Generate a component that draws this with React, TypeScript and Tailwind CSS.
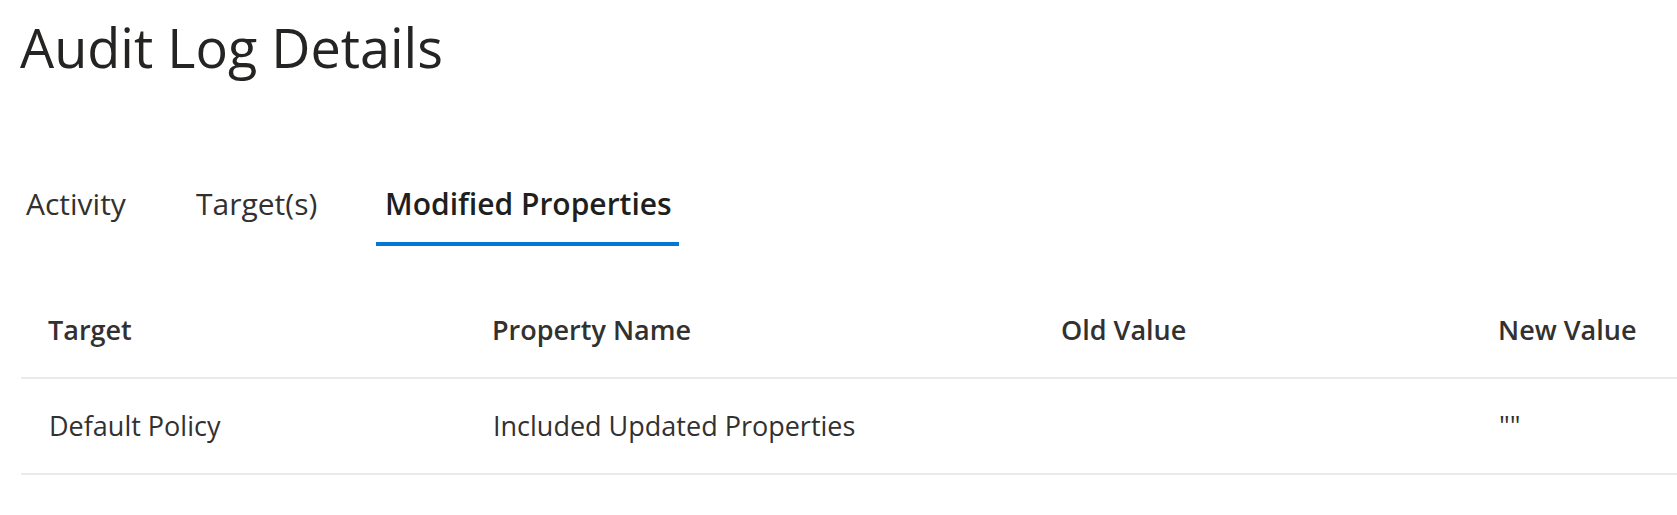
const font = { fontFamily: '"Segoe UI", "Open Sans", sans-serif' };

const tabs = [
  { label: "Activity", w: "w-[170px]", pl: "pl-[8px]", active: false },
  { label: "Target(s)", w: "w-[188px]", pl: "pl-[8px]", active: false },
  { label: "Modified Properties", w: "w-[304px]", pl: "pl-[9px]", active: true },
];

const cols = ["w-[444px]", "w-[569px]", "w-[437px]", "flex-1"];
const head = ["Target", "Property Name", "Old Value", "New Value"];
const row = ["Default Policy", "Included Updated Properties", "", '""'];

export default function App() {
  return (
    <div className="w-screen h-screen bg-white text-[#323130] overflow-hidden" style={font}>
      <h1 className="pl-[20px] pt-[9px] text-[54px] leading-[76px] font-normal text-[#252423]">
        Audit Log Details
      </h1>

      <div className="flex pl-[18px] mt-[97px]">
        {tabs.map((t) => (
          <button
            key={t.label}
            className={`${t.w} ${t.pl} text-left h-[64px] flex flex-col justify-between`}
          >
            <span
              className={`text-[30px] leading-[44px] ${
                t.active ? "font-semibold text-[#201f1e]" : "font-normal text-[#323130]"
              }`}
            >
              {t.label}
            </span>
            <span
              className={`block h-[4px] ${t.active ? "bg-[#0078d4] w-[303px] -ml-[9px]" : ""}`}
            />
          </button>
        ))}
      </div>

      <div className="ml-[21px] mt-[37px]">
        <div className="flex h-[96px] items-center border-b-2 border-[#edebe9]">
          {head.map((h, i) => (
            <div key={h} className={`${cols[i]} pl-[27px] text-[27px] font-semibold text-[#323130]`}>
              {h}
            </div>
          ))}
        </div>
        <div className="flex h-[96px] items-center border-b-2 border-[#edebe9]">
          {row.map((c, i) => (
            <div key={i} className={`${cols[i]} pl-[28px] text-[27px] text-[#323130]`}>
              {c}
            </div>
          ))}
        </div>
      </div>
    </div>
  );
}
